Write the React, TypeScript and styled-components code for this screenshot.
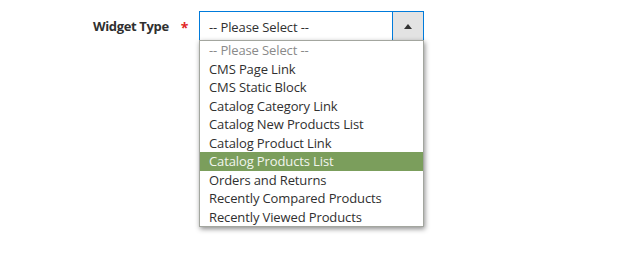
import styled, { createGlobalStyle } from "styled-components";

const GlobalStyle = createGlobalStyle`
  body {
    margin: 0;
    background: #fff;
    font-family: "Open Sans", "Liberation Sans", sans-serif;
  }
`;

const Page = styled.div`
  padding-top: 11px;
  height: 242px;
`;

const FieldRow = styled.div`
  display: flex;
  align-items: flex-start;
`;

const Label = styled.label`
  width: 199px;
  box-sizing: border-box;
  padding-right: 11px;
  display: flex;
  justify-content: flex-end;
  align-items: center;
  height: 30px;
  font-size: 13px;
  font-weight: 700;
  letter-spacing: -0.35px;
  color: #303030;
`;

const Required = styled.span`
  color: #e22626;
  font-size: 14px;
  margin-left: 12px;
  position: relative;
  top: 1px;
`;

const SelectWrap = styled.div`
  display: flex;
  flex-direction: column;
  width: 225px;
`;

const SelectBox = styled.div`
  display: flex;
  height: 30px;
  box-sizing: border-box;
  border: 1px solid #007bdb;
  color: #303030;
  font-size: 13px;
  letter-spacing: -0.1px;
`;

const SelectValue = styled.div`
  flex: 1;
  display: flex;
  align-items: center;
  padding: 1px 0 0 9px;
`;

const ArrowButton = styled.div`
  width: 30px;
  background: #e3e3e3;
  border-left: 1px solid #007bdb;
  display: flex;
  align-items: center;
  justify-content: center;
`;

const Arrow = styled.span`
  width: 0;
  height: 0;
  border-left: 4px solid transparent;
  border-right: 4px solid transparent;
  border-bottom: 5px solid #333;
`;

const Options = styled.ul`
  margin: -1px 0 0;
  padding: 0;
  list-style: none;
  background: #fff;
  border: 1px solid #a3a69f;
  box-shadow: 1px 2px 5px rgba(0, 0, 0, 0.45);
`;

const Option = styled.li<{ $placeholder?: boolean; $active?: boolean }>`
  height: 18.5px;
  line-height: 19.5px;
  padding-left: 9px;
  font-size: 13px;
  letter-spacing: -0.12px;
  white-space: nowrap;
  color: ${(p) => (p.$active ? "#f2f5ee" : p.$placeholder ? "#8a8a8a" : "#303030")};
  background: ${(p) => (p.$active ? "#7b9e5c" : "transparent")};
`;

const items = [
  "CMS Page Link",
  "CMS Static Block",
  "Catalog Category Link",
  "Catalog New Products List",
  "Catalog Product Link",
  "Catalog Products List",
  "Orders and Returns",
  "Recently Compared Products",
  "Recently Viewed Products",
];

const App = () => {
  const active = "Catalog Products List";

  return (
    <Page>
      <GlobalStyle />
      <FieldRow>
        <Label>
          Widget Type<Required>*</Required>
        </Label>
        <SelectWrap>
          <SelectBox>
            <SelectValue>-- Please Select --</SelectValue>
            <ArrowButton>
              <Arrow />
            </ArrowButton>
          </SelectBox>
          <Options>
            <Option $placeholder>-- Please Select --</Option>
            {items.map((item) => (
              <Option key={item} $active={item === active}>
                {item}
              </Option>
            ))}
          </Options>
        </SelectWrap>
      </FieldRow>
    </Page>
  );
};

export default App;
